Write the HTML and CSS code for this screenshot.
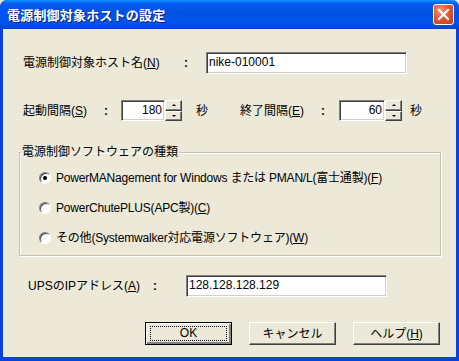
FILE: index.html
```html
<!DOCTYPE html>
<html lang="ja">
<head>
  <meta charset="UTF-8">
  <title>電源制御対象ホストの設定</title>
  <link rel="stylesheet" href="styles.css">
</head>
<body>
  <div class="window">
    <div class="titlebar">
      <span class="title">電源制御対象ホストの設定</span>
      <span class="close">
        <svg width="13" height="13" viewBox="0 0 13 13"><path d="M2 2 L11 11 M11 2 L2 11" stroke="#fff" stroke-width="2.2" stroke-linecap="square"/></svg>
      </span>
    </div>

    <div class="content">
      <!-- host name -->
      <div class="row row-host">
        <span class="label host-label">電源制御対象ホスト名(<u>N</u>)</span>
        <span class="colon host-colon">:</span>
        <span class="textbox host-box">nike-010001</span>
      </div>

      <!-- intervals -->
      <div class="row row-interval">
        <span class="label start-label">起動間隔(<u>S</u>)</span>
        <span class="colon start-colon">:</span>
        <span class="textbox num-box start-box">180</span>
        <span class="spin"><span class="spin-btn"><i class="up"></i></span><span class="spin-btn"><i class="down"></i></span></span>
        <span class="unit start-unit">秒</span>
        <span class="label end-label">終了間隔(<u>E</u>)</span>
        <span class="colon end-colon">:</span>
        <span class="textbox num-box end-box">60</span>
        <span class="spin"><span class="spin-btn"><i class="up"></i></span><span class="spin-btn"><i class="down"></i></span></span>
        <span class="unit end-unit">秒</span>
      </div>

      <!-- software type -->
      <fieldset class="group">
        <legend>電源制御ソフトウェアの種類</legend>
        <div class="radio-row"><span class="radio checked"></span>PowerMANagement for Windows または PMAN/L(富士通製)(<u>F</u>)</div>
        <div class="radio-row"><span class="radio"></span>PowerChutePLUS(APC製)(<u>C</u>)</div>
        <div class="radio-row"><span class="radio"></span>その他(Systemwalker対応電源ソフトウェア)(<u>W</u>)</div>
      </fieldset>

      <!-- UPS address -->
      <div class="row row-ups">
        <span class="label ups-label">UPSのIPアドレス(<u>A</u>)</span>
        <span class="colon ups-colon">:</span>
        <span class="textbox ups-box">128.128.128.129</span>
      </div>

      <div class="buttons">
        <span class="button default"><span class="focus">OK</span></span>
        <span class="button">キャンセル</span>
        <span class="button">ヘルプ(<u>H</u>)</span>
      </div>
    </div>
  </div>
</body>
</html>
```

FILE: styles.css
```css
body {
  margin: 0;
  background: #ece9d8;
  font-family: "Liberation Sans", "Noto Sans CJK JP", sans-serif;
  font-size: 12px;
  color: #000;
}

.window {
  width: 459px;
  height: 361px;
  display: flex;
  flex-direction: column;
  background: #0842d6;
  border-radius: 7px 7px 0 0;
  overflow: hidden;
}

/* Title bar */
.titlebar {
  height: 29px;
  flex: none;
  display: flex;
  align-items: center;
  justify-content: space-between;
  padding: 0 5px 0 7px;
  background: linear-gradient(#0a97ff 0%, #0a5bf0 12%, #0054e3 40%, #0055ea 80%, #0642cf 100%);
}

.title {
  color: #fff;
  font-family: "Noto Sans CJK JP", sans-serif;
  font-weight: bold;
  font-size: 13px;
  line-height: 16px;
  letter-spacing: 0.2px;
  text-shadow: 1px 1px 0 #0a1b7e;
}

.close {
  width: 19px;
  height: 19px;
  border: 1px solid #fff;
  border-radius: 3px;
  display: flex;
  align-items: center;
  justify-content: center;
  background: radial-gradient(circle at 35% 30%, #f29a7c 0%, #e5572f 45%, #c3361a 100%);
}

/* Client area */
.content {
  flex: 1;
  margin: 0 3px 4px 3px;
  background: #ece9d8;
  display: flex;
  flex-direction: column;
}

.row {
  display: flex;
  align-items: center;
  padding-left: 20px;
}

.label,
.unit,
.colon {
  line-height: 14px;
  white-space: nowrap;
}

.colon {
  font-weight: bold;
}

.textbox {
  box-sizing: border-box;
  background: #fff;
  border: 1px solid;
  border-color: #808080 #fff #fff #808080;
  box-shadow: inset 1px 1px 0 #404040, inset -1px -1px 0 #d4d0c8;
  padding: 0 2px;
  line-height: 18px;
  white-space: nowrap;
}

.row-host {
  margin-top: 23px;
  height: 22px;
}
.host-label { width: 161px; }
.host-colon { width: 22px; }
.host-box { width: 201px; height: 22px; line-height: 19px; }

.row-interval {
  margin-top: 26px;
  height: 21px;
}
.num-box {
  height: 21px;
  text-align: right;
  padding-right: 2px;
}
.start-label { width: 81px; }
.start-colon { width: 17px; }
.start-box { width: 44px; }
.start-unit { margin-left: 14px; width: 12px; }
.end-label { margin-left: 32px; width: 81px; }
.end-colon { width: 18px; }
.end-box { width: 46px; }
.end-unit { margin-left: 8px; }

.spin {
  display: flex;
  flex-direction: column;
  width: 17px;
  height: 21px;
}
.spin-btn {
  flex: 1;
  box-sizing: border-box;
  background: #ece9d8;
  border: 1px solid;
  border-color: #fff #404040 #404040 #fff;
  box-shadow: inset -1px -1px 0 #808080;
  display: flex;
  align-items: center;
  justify-content: center;
}
.spin-btn i {
  width: 0;
  height: 0;
  border-left: 2px solid transparent;
  border-right: 2px solid transparent;
}
.spin-btn .up { border-bottom: 2px solid #000; }
.spin-btn .down { border-top: 2px solid #000; }

/* Group box */
.group {
  margin: 24px 15px 0 16px;
  padding: 4px 0 2px 19px;
  border: 1px solid #c5c2b2;
  border-radius: 0;
  box-shadow: 1px 1px 0 #fff, inset 1px 1px 0 #fff;
  min-width: 0;
}
.group legend {
  padding: 0 1px;
  margin-left: -18px;
  line-height: 14px;
}

.radio-row {
  display: flex;
  align-items: center;
  height: 30px;
  line-height: 14px;
  white-space: nowrap;
  letter-spacing: -0.2px;
}

.radio {
  box-sizing: border-box;
  width: 12px;
  height: 12px;
  margin-right: 5px;
  border-radius: 50%;
  border: 1px solid;
  border-color: #808080 #fff #fff #808080;
  background: #fff;
  box-shadow: inset 1px 1px 0 #404040;
  position: relative;
}
.radio.checked::after {
  content: "";
  position: absolute;
  left: 3px;
  top: 3px;
  width: 4px;
  height: 4px;
  border-radius: 50%;
  background: #000;
}

.row-ups {
  margin-top: 19px;
  height: 22px;
  padding-left: 25px;
}
.ups-label { width: 125px; }
.ups-colon { width: 33px; }
.ups-box { width: 201px; height: 22px; line-height: 19px; }

/* Buttons */
.buttons {
  display: flex;
  justify-content: flex-end;
  gap: 17px;
  margin-top: 25px;
  padding-right: 16px;
}

.button {
  box-sizing: border-box;
  width: 87px;
  height: 23px;
  display: flex;
  align-items: center;
  justify-content: center;
  background: #ece9d8;
  border: 1px solid;
  border-color: #fff #404040 #404040 #fff;
  box-shadow: inset -1px -1px 0 #808080;
  line-height: 14px;
}

.button.default {
  border: 1px solid #000;
  box-shadow: inset 1px 1px 0 #fff, inset -2px -2px 0 #808080;
}

.focus {
  box-sizing: border-box;
  width: 77px;
  height: 15px;
  border: 1px dotted #000;
  text-align: center;
  line-height: 13px;
}
```
